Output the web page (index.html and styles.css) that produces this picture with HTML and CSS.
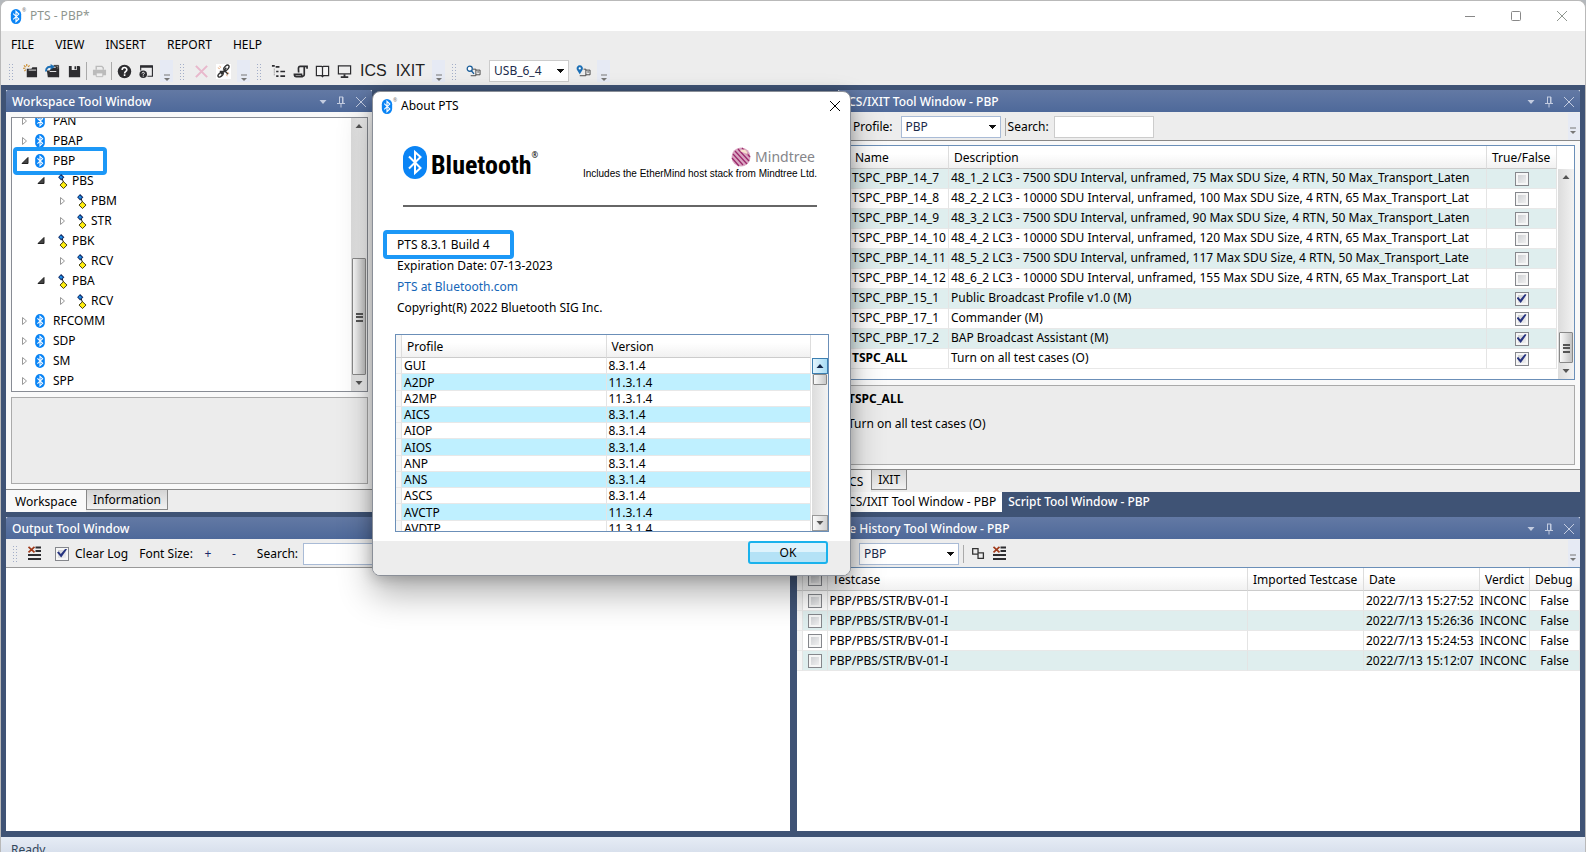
FILE: index.html
```html
<!DOCTYPE html>
<html lang="en">
<head>
<meta charset="utf-8">
<title>PTS - PBP*</title>
<link rel="stylesheet" href="styles.css">
</head>
<body>
<svg class="defs" aria-hidden="true">
  <symbol id="bt" viewBox="0 0 12 16"><rect x="0.5" width="11" height="16" rx="5.5" fill="#0a84f5"/><path d="M3 5l6 5.600L6 13.500v-11l3 2.900L3 11" fill="none" stroke="#fff" stroke-width="1.200"/></symbol>
  <symbol id="node" viewBox="0 0 10 16"><path d="M4 5l2 5" stroke="#000"/><path d="M3 0l3.500 3.500L3 7-.2 3.500z" fill="#102a66"/><path d="M2.600 1.500l2.400 2-2 1.800-2-1.800z" fill="#1e8fe8"/><path d="M5.500 8.200l3.800 3.600-3.800 3.700L1.800 11.800z" fill="#ffee10" stroke="#3a3408"/></symbol>
  <symbol id="closed" viewBox="0 0 8 10"><path d="M1.500 1.500v7L5.500 5z" fill="#fff" stroke="#999"/></symbol>
  <symbol id="open" viewBox="0 0 8 10"><path d="M7 1.500v6H1z" fill="#444" stroke="#222"/></symbol>
  <symbol id="down" viewBox="0 0 8 8"><path d="M.5 2h7L4 6z" fill="currentColor"/></symbol>
  <symbol id="up" viewBox="0 0 8 8"><path d="M.5 6h7L4 2z" fill="currentColor"/></symbol>
  <symbol id="pin" viewBox="0 0 8 12"><path d="M2 1h4v6M2.500 1v6M0 7.500h8M4 8v3.500M5.500 1v6" fill="none" stroke="currentColor"/></symbol>
  <symbol id="cross" viewBox="0 0 12 12"><path d="M1 1l10 10M11 1L1 11" fill="none" stroke="currentColor"/></symbol>
  <symbol id="more" viewBox="0 0 10 8"><path d="M2 1h6" stroke="#777"/><path d="M2 4h6L5 7z" fill="#777"/></symbol>
  <symbol id="clear" viewBox="0 0 14 15"><path d="M8 1.500h5.500M8 5h5.500M.5 9h13M.5 13h13" stroke="#2d2d30" stroke-width="2"/><path d="M1 .8l6 5.600M7 .8L1 6.400" stroke="#a03a1a" stroke-width="1.700"/></symbol>
</svg>
<main class="window">
  <header class="titlebar">
    <svg class="app-icon"><use href="#bt"/></svg><span class="dot">®</span>
    <h1>PTS - PBP*</h1>
    <button aria-label="Minimize"><svg viewBox="0 0 12 12"><path d="M1 6.500h10" stroke="#888"/></svg></button>
    <button aria-label="Maximize"><svg viewBox="0 0 12 12"><rect x="1.500" y="1.500" width="9" height="9" rx="1" fill="none" stroke="#888"/></svg></button>
    <button aria-label="Close"><svg><use href="#cross"/></svg></button>
  </header>
  <nav class="menubar"><button>FILE</button><button>VIEW</button><button>INSERT</button><button>REPORT</button><button>HELP</button></nav>
  <div class="toolbar main-tools">
    <i class="grip"></i>
    <button aria-label="New"><svg viewBox="0 0 16 16"><path d="M4 5h5l1-1.500h5V14H4z" fill="#2d2d30"/><path d="M6 6.500h8" stroke="#eee"/><path d="M4 0v2.500M0 4.500h2.500M1 1.500l1.700 1.700M7 1.500L5.500 3M1.500 7.500L3 6" stroke="#c98a2b" stroke-width="1.200"/></svg></button>
    <button aria-label="Open"><svg viewBox="0 0 16 16"><path d="M2 7h3l2-3h8v10H3z" fill="#2d2d30"/><path d="M9 2h5v3M5 8h7" stroke="#eee"/><path d="M9.500 3V1.500h5V14" fill="none" stroke="#2d2d30"/><path d="M1 8C1 3.500 4 2.500 7 3" fill="none" stroke="#1c6fb5" stroke-width="2"/><path d="M6 0l4.500 3L6 6z" fill="#1c6fb5"/></svg></button>
    <button aria-label="Save"><svg viewBox="0 0 16 16"><path d="M2 2h11l1 1v11H2z" fill="#2d2d30"/><path d="M5 2h5.500v4.500H5z" fill="#eee"/><path d="M8 2.500h1.700v3H8z" fill="#2d2d30"/></svg></button>
    <i class="sep"></i>
    <button aria-label="Print" disabled><svg viewBox="0 0 16 16"><path d="M4.500 6V2.500h6L12 4v2" fill="none" stroke="#bbb" stroke-width="1.500"/><path d="M1 6h14v6H1z" fill="#bbb"/><path d="M4.500 9.500h7v4h-7z" fill="#eee" stroke="#bbb"/></svg></button>
    <i class="sep"></i>
    <button aria-label="Help"><svg viewBox="0 0 16 16"><circle cx="8" cy="8" r="7.200" fill="#2d2d30"/><path d="M5.500 6.300C5.500 3 10.500 3 10.500 6c0 1.800-2.400 1.900-2.400 4M8.100 11v1.800" fill="none" stroke="#fff" stroke-width="1.700"/></svg></button>
    <button aria-label="Window help"><svg viewBox="0 0 16 16"><path d="M1.800 7V2.500h12.500V13H9" fill="none" stroke="#2d2d30" stroke-width="1.200"/><path d="M1.200 2.700h13.600" stroke="#2d2d30" stroke-width="2.500"/><circle cx="4.500" cy="11" r="4" fill="#2d2d30"/><path d="M3.200 10c.3-1.600 2.700-1.400 2.500 0-.1.800-1.200.8-1.200 2M4.500 12.500v1" stroke="#fff" fill="none"/></svg></button>
    <button class="more" aria-label="More"><svg><use href="#more"/></svg></button>
    <i class="grip"></i>
    <button aria-label="Delete" disabled><svg viewBox="0 0 16 16"><path d="M2 2l12 12M14 2L2 14" stroke="#e8b8cc" stroke-width="2.200"/></svg></button>
    <button aria-label="Link"><svg viewBox="0 0 16 16"><path d="M0 0h16v16H0z" fill="#fff"/><path d="M8 6c0-3 4-6 5.500-4.500S12 7 9.500 7.500M8 9c0 3-4 6-5.500 4.500S4 9 7 8.500M5.500 11L11 4M4 8h6l3 3" fill="none" stroke="#333" stroke-width="1.500"/><path d="M2 4l2 1M4 2l1 2M12 13l-1-2M14 10l-2-1" stroke="#e0a070"/></svg></button>
    <button class="more" aria-label="More"><svg><use href="#more"/></svg></button>
    <i class="grip"></i>
    <button aria-label="Outline"><svg viewBox="0 0 16 16"><path d="M1 2h3M5 3h4M5.500 8H8M10 8h5M5.500 13H8M10 13h5" stroke="#2d2d30" stroke-width="1.800"/><path d="M3.500 5v8" stroke="#777" stroke-dasharray="1 1"/></svg></button>
    <button aria-label="Script"><svg viewBox="0 0 16 16"><path d="M15 5V2.500H7.500C5 2.500 6 6 6 9M12 3v8c0 3-3 2.500-3 0H1.500c0 2 .5 2.500 2 2.500h7" fill="none" stroke="#2d2d30" stroke-width="1.800"/></svg></button>
    <button aria-label="Book"><svg viewBox="0 0 16 16"><path d="M1.500 2.500H7l1 1 1-1h5.500v10H9l-1 1-1-1H1.500zM8 3v11" fill="#f5f5f5" stroke="#2d2d30" stroke-width="1.300"/></svg></button>
    <button aria-label="Monitor"><svg viewBox="0 0 16 16"><path d="M1.500 2h13v8.500h-13z" fill="none" stroke="#2d2d30" stroke-width="1.300"/><path d="M7 11h2v2H7zM4 13h8v1.800H4z" fill="#2d2d30"/></svg></button>
    <button class="word">ICS</button>
    <button class="word">IXIT</button>
    <button class="more" aria-label="More"><svg><use href="#more"/></svg></button>
    <i class="grip"></i>
    <button aria-label="Find device"><svg viewBox="0 0 16 16"><path d="M5 12.500h5.500v-7H7M10.500 6.500H15v5h-4.500M12 8.500h2" fill="none" stroke="#444"/><circle cx="4" cy="5" r="2.700" fill="#fff" stroke="#1c5f9a" stroke-width="1.400"/><path d="M5.500 7l3 3.500" stroke="#1c5f9a" stroke-width="1.500"/></svg></button>
    <select aria-label="Device" class="device"><option>USB_6_4</option></select>
    <button aria-label="Locate device"><svg viewBox="0 0 16 16"><path d="M4 12.500h6.500v-7H8M10.500 6.500H15v5h-4.500M12 8.500h2" fill="none" stroke="#444"/><path d="M4 11L1 6a3.300 3.300 0 1 1 6 0z" fill="#1c6fb5"/><circle cx="4" cy="4.700" r="1.200" fill="#fff"/></svg></button>
    <button class="more" aria-label="More"><svg><use href="#more"/></svg></button>
  </div>

  <div class="workbench">
    <div class="upper">
      <section class="panel workspace">
        <div class="panel-title"><h2>Workspace Tool Window</h2><svg class="t1"><use href="#down"/></svg><svg class="t2"><use href="#pin"/></svg><svg class="t3"><use href="#cross"/></svg></div>
        <div class="workspace-body">
          <div class="tree-box">
            <ul class="tree">
              <li><svg class="tw"><use href="#closed"/></svg><svg class="ic"><use href="#bt"/></svg>PAN</li>
              <li><svg class="tw"><use href="#closed"/></svg><svg class="ic"><use href="#bt"/></svg>PBAP</li>
              <li class="marked"><svg class="tw"><use href="#open"/></svg><svg class="ic"><use href="#bt"/></svg>PBP</li>
              <li class="l2"><svg class="tw"><use href="#open"/></svg><svg class="ic"><use href="#node"/></svg>PBS</li>
              <li class="l3"><svg class="tw"><use href="#closed"/></svg><svg class="ic"><use href="#node"/></svg>PBM</li>
              <li class="l3"><svg class="tw"><use href="#closed"/></svg><svg class="ic"><use href="#node"/></svg>STR</li>
              <li class="l2"><svg class="tw"><use href="#open"/></svg><svg class="ic"><use href="#node"/></svg>PBK</li>
              <li class="l3"><svg class="tw"><use href="#closed"/></svg><svg class="ic"><use href="#node"/></svg>RCV</li>
              <li class="l2"><svg class="tw"><use href="#open"/></svg><svg class="ic"><use href="#node"/></svg>PBA</li>
              <li class="l3"><svg class="tw"><use href="#closed"/></svg><svg class="ic"><use href="#node"/></svg>RCV</li>
              <li><svg class="tw"><use href="#closed"/></svg><svg class="ic"><use href="#bt"/></svg>RFCOMM</li>
              <li><svg class="tw"><use href="#closed"/></svg><svg class="ic"><use href="#bt"/></svg>SDP</li>
              <li><svg class="tw"><use href="#closed"/></svg><svg class="ic"><use href="#bt"/></svg>SM</li>
              <li><svg class="tw"><use href="#closed"/></svg><svg class="ic"><use href="#bt"/></svg>SPP</li>
            </ul>
            <div class="scroll"><svg><use href="#up"/></svg><span class="track"></span><span class="thumb long"></span><svg><use href="#down"/></svg></div>
          </div>
          <div class="info-box"></div>
        </div>
        <div class="tabs"><button class="tab on">Workspace</button><button class="tab">Information</button></div>
      </section>
      <section class="panel ics">
        <div class="panel-title"><h2>ICS/IXIT Tool Window - PBP</h2><svg class="t1"><use href="#down"/></svg><svg class="t2"><use href="#pin"/></svg><svg class="t3"><use href="#cross"/></svg></div>
        <div class="toolbar ics-tools">
          <label for="ics-profile">Profile:</label><select id="ics-profile"><option>PBP</option></select>
          <i class="sep"></i>
          <label for="ics-search">Search:</label><input type="text" id="ics-search">
          <span class="end-more"><svg><use href="#more"/></svg></span>
        </div>
        <div class="ics-body">
          <div class="grid-box">
            <table class="grid ics-grid">
              <colgroup><col class="c-head"><col class="c-name"><col><col class="c-flag"></colgroup>
              <thead><tr><th></th><th>Name</th><th>Description</th><th>True/False</th></tr></thead>
              <tbody>
                <tr><td></td><td>TSPC_PBP_14_7</td><td>48_1_2 LC3 - 7500 SDU Interval, unframed, 75 Max SDU Size, 4 RTN, 50 Max_Transport_Laten</td><td><input type="checkbox" aria-label="TSPC_PBP_14_7"></td></tr>
                <tr><td></td><td>TSPC_PBP_14_8</td><td>48_2_2 LC3 - 10000 SDU Interval, unframed, 100 Max SDU Size, 4 RTN, 65 Max_Transport_Lat</td><td><input type="checkbox" aria-label="TSPC_PBP_14_8"></td></tr>
                <tr><td></td><td>TSPC_PBP_14_9</td><td>48_3_2 LC3 - 7500 SDU Interval, unframed, 90 Max SDU Size, 4 RTN, 50 Max_Transport_Laten</td><td><input type="checkbox" aria-label="TSPC_PBP_14_9"></td></tr>
                <tr><td></td><td>TSPC_PBP_14_10</td><td>48_4_2 LC3 - 10000 SDU Interval, unframed, 120 Max SDU Size, 4 RTN, 65 Max_Transport_Lat</td><td><input type="checkbox" aria-label="TSPC_PBP_14_10"></td></tr>
                <tr><td></td><td>TSPC_PBP_14_11</td><td>48_5_2 LC3 - 7500 SDU Interval, unframed, 117 Max SDU Size, 4 RTN, 50 Max_Transport_Late</td><td><input type="checkbox" aria-label="TSPC_PBP_14_11"></td></tr>
                <tr><td></td><td>TSPC_PBP_14_12</td><td>48_6_2 LC3 - 10000 SDU Interval, unframed, 155 Max SDU Size, 4 RTN, 65 Max_Transport_Lat</td><td><input type="checkbox" aria-label="TSPC_PBP_14_12"></td></tr>
                <tr><td></td><td>TSPC_PBP_15_1</td><td>Public Broadcast Profile v1.0 (M)</td><td><input type="checkbox" checked aria-label="TSPC_PBP_15_1"></td></tr>
                <tr><td></td><td>TSPC_PBP_17_1</td><td>Commander (M)</td><td><input type="checkbox" checked aria-label="TSPC_PBP_17_1"></td></tr>
                <tr><td></td><td>TSPC_PBP_17_2</td><td>BAP Broadcast Assistant (M)</td><td><input type="checkbox" checked aria-label="TSPC_PBP_17_2"></td></tr>
                <tr><td></td><td><b>TSPC_ALL</b></td><td>Turn on all test cases (O)</td><td><input type="checkbox" checked aria-label="TSPC_ALL"></td></tr>
              </tbody>
            </table>
            <div class="scroll below-head"><svg><use href="#up"/></svg><span class="track"></span><span class="thumb short"></span><svg><use href="#down"/></svg></div>
          </div>
          <div class="info-box"><b>TSPC_ALL</b><p>Turn on all test cases (O)</p></div>
        </div>
        <div class="tabs"><button class="tab on">ICS</button><button class="tab">IXIT</button></div>
        <div class="dock-tabs"><button class="on">ICS/IXIT Tool Window - PBP</button><button>Script Tool Window - PBP</button></div>
      </section>
    </div>
    <div class="lower">
      <section class="panel output">
        <div class="panel-title"><h2>Output Tool Window</h2></div>
        <div class="toolbar out-tools">
          <i class="grip"></i>
          <button aria-label="Clear"><svg><use href="#clear"/></svg></button>
          <input type="checkbox" id="clear-log" checked><label for="clear-log">Clear Log</label>
          <span class="fs">Font Size:</span><button class="pm">+</button><button class="pm">-</button>
          <label for="out-search">Search:</label><input type="text" id="out-search">
        </div>
        <div class="log"></div>
      </section>
      <section class="panel history">
        <div class="panel-title"><h2>Test Case History Tool Window - PBP</h2><svg class="t1"><use href="#down"/></svg><svg class="t2"><use href="#pin"/></svg><svg class="t3"><use href="#cross"/></svg></div>
        <div class="toolbar hist-tools">
          <label for="hist-profile">Profile:</label><select id="hist-profile"><option>PBP</option></select>
          <i class="sep"></i>
          <button aria-label="Cascade"><svg viewBox="0 0 14 14"><path d="M2.500 2.500h5v5h-5zM7.500 6.500h5v5h-5z" fill="#eee" stroke="#333" stroke-width="1.200"/></svg></button>
          <button aria-label="Clear"><svg><use href="#clear"/></svg></button>
          <span class="end-more"><svg><use href="#more"/></svg></span>
        </div>
        <div class="log">
          <table class="grid hist-grid">
            <colgroup><col class="c-head"><col class="c-check"><col><col class="c-imp"><col class="c-date"><col class="c-verd"><col class="c-debug"></colgroup>
            <thead><tr><th></th><th><input type="checkbox" aria-label="Select all"></th><th>Testcase</th><th>Imported Testcase</th><th>Date</th><th>Verdict</th><th>Debug</th></tr></thead>
            <tbody>
              <tr><td></td><td><input type="checkbox" aria-label="Row 1"></td><td>PBP/PBS/STR/BV-01-I</td><td></td><td>2022/7/13 15:27:52</td><td>INCONC</td><td>False</td></tr>
              <tr><td></td><td><input type="checkbox" aria-label="Row 2"></td><td>PBP/PBS/STR/BV-01-I</td><td></td><td>2022/7/13 15:26:36</td><td>INCONC</td><td>False</td></tr>
              <tr><td></td><td><input type="checkbox" aria-label="Row 3"></td><td>PBP/PBS/STR/BV-01-I</td><td></td><td>2022/7/13 15:24:53</td><td>INCONC</td><td>False</td></tr>
              <tr><td></td><td><input type="checkbox" aria-label="Row 4"></td><td>PBP/PBS/STR/BV-01-I</td><td></td><td>2022/7/13 15:12:07</td><td>INCONC</td><td>False</td></tr>
            </tbody>
          </table>
        </div>
      </section>
    </div>
  </div>
  <footer class="status">Ready</footer>

  <div class="dialog" role="dialog" aria-label="About PTS">
    <div class="dialog-title"><svg class="app-icon"><use href="#bt"/></svg><span class="dot">®</span><h2>About PTS</h2><button aria-label="Close"><svg><use href="#cross"/></svg></button></div>
    <div class="brand">
      <svg class="bt-logo" viewBox="0 0 24 33"><rect width="24" height="33" rx="12" fill="#0a84f5"/><path d="M6 10.500l11.500 11.500L12 27V6l5.500 5L6 22.500" fill="none" stroke="#fff" stroke-width="2"/></svg>
      <span class="bt-word">Bluetooth</span><span class="reg">®</span>
      <div class="partner">
        <div class="mind"><svg viewBox="0 0 20 20"><circle cx="10" cy="10" r="9.500" fill="#d9a6c2"/><path d="M2 7l10 11M4 4l12 13M7 2l11 12M11 1l8 9M1 11l7 8" stroke="#9c2a6c" stroke-width="1.300"/><path d="M9 4c4-3 7-1 8 4-3-3-5-2-8-4z" fill="#f8e3cd"/></svg><span>Mindtree</span></div>
        <small>Includes the EtherMind host stack from Mindtree Ltd.</small>
      </div>
    </div>
    <div class="facts">
      <p class="marked">PTS 8.3.1 Build 4</p>
      <p>Expiration Date: 07-13-2023</p>
      <p><a href="#">PTS at Bluetooth.com</a></p>
      <p>Copyright(R) 2022 Bluetooth SIG Inc.</p>
    </div>
    <div class="version-box">
      <table class="grid ver-grid">
        <colgroup><col class="c-head"><col><col></colgroup>
        <thead><tr><th></th><th>Profile</th><th>Version</th></tr></thead>
        <tbody>
          <tr><td></td><td>GUI</td><td>8.3.1.4</td></tr>
          <tr><td></td><td>A2DP</td><td>11.3.1.4</td></tr>
          <tr><td></td><td>A2MP</td><td>11.3.1.4</td></tr>
          <tr><td></td><td>AICS</td><td>8.3.1.4</td></tr>
          <tr><td></td><td>AIOP</td><td>8.3.1.4</td></tr>
          <tr><td></td><td>AIOS</td><td>8.3.1.4</td></tr>
          <tr><td></td><td>ANP</td><td>8.3.1.4</td></tr>
          <tr><td></td><td>ANS</td><td>8.3.1.4</td></tr>
          <tr><td></td><td>ASCS</td><td>8.3.1.4</td></tr>
          <tr><td></td><td>AVCTP</td><td>11.3.1.4</td></tr>
          <tr><td></td><td>AVDTP</td><td>11.3.1.4</td></tr>
        </tbody>
      </table>
      <div class="scroll below-head boxed"><svg class="hot"><use href="#up"/></svg><span class="thumb tiny"></span><span class="track"></span><svg><use href="#down"/></svg></div>
    </div>
    <div class="dialog-foot"><button class="ok">OK</button></div>
  </div>
</main>
</body>
</html>
```
FILE: styles.css
```css
*, *::before, *::after { box-sizing: border-box; }
body { margin: 0; background: #b4b8bc; font: 12px/16px "Noto Sans", "Open Sans", sans-serif; color: #000; overflow: hidden; }
h1, h2, p, ul { margin: 0; padding: 0; font-size: 12px; font-weight: 400; }
button, input, select { font: inherit; color: inherit; margin: 0; }
button { border: 0; background: none; padding: 0; }
svg { display: block; flex: none; }
.defs { position: absolute; width: 0; height: 0; }

.window { position: relative; height: 100vh; display: flex; flex-direction: column; overflow: hidden; background: #ededed; border: 1px solid #b9b9b9; border-bottom: 0; border-radius: 8px 8px 0 0; }
.titlebar { display: flex; align-items: center; height: 30px; flex: none; background: #fff; padding-left: 9px; color: #8f968f; }
.titlebar h1 { flex: 1; }
.titlebar button { width: 46px; height: 30px; display: grid; place-items: center; }
.titlebar button svg { width: 12px; height: 12px; }
.app-icon { width: 12px; height: 15px; }
.dot { width: 8px; height: 16px; font-size: 5px; line-height: 5px; color: #777; }
.menubar { display: flex; gap: 21px; height: 28px; flex: none; padding-left: 10px; align-items: center; }

.toolbar { display: flex; align-items: center; flex: none; background: #ededed; padding-top: 1px; }
.toolbar button { width: 22px; height: 22px; display: grid; place-items: center; flex: none; }
.toolbar button svg { width: 15px; height: 15px; }
.toolbar .more { width: 13px; background: #e6eaf4; align-items: end; margin: 0 6px 0 3px; }
.toolbar .more svg, .end-more svg { width: 10px; height: 8px; }
.grip { width: 6px; height: 17px; margin-right: 5px; flex: none; background: radial-gradient(circle, #a3aec8 0 1px, transparent 1px) 0 0 / 3px 3px; }
.sep { width: 1px; height: 18px; background: #aaa; margin: 0 1px; flex: none; }
.main-tools { height: 26px; padding: 0 0 2px 7px; }
.main-tools .word { font: 16px/22px "Liberation Sans", Arial, sans-serif; width: auto; margin: 0 4px 0 5px; color: #222; }
select { appearance: none; border: 1px solid #a9bbd6; border-radius: 0; height: 22px; padding: 0 4px; color: #1b2a4a; background: linear-gradient(to bottom left, #111 50%, transparent 50%) right 7px center / 4px 4px no-repeat, linear-gradient(to bottom right, #111 50%, transparent 50%) right 3px center / 4px 4px no-repeat, #fff; }
.device { width: 80px; margin: 0 3px 0 5px; border-color: #ccc; }
input[type="text"] { height: 22px; border: 1px solid #ccc; background: #fff; padding: 0 4px; }
input[type="checkbox"] { appearance: none; width: 14px; height: 14px; flex: none; border: 1px solid #85878c; background: linear-gradient(135deg, #c8cace, #f6f6f6); box-shadow: inset 0 0 0 2px #f6f6f6; display: block; }
input[type="checkbox"]:checked::after { content: ""; display: block; width: 10px; height: 9px; margin: 1px; background: #26337f; clip-path: polygon(0 45%, 18% 32%, 38% 60%, 85% 0, 100% 8%, 42% 100%); }

.workbench { display: flex; flex-direction: column; flex: none; gap: 5px; height: 752px; padding: 5px 5px 6px; background: #3f5375; }
.upper { display: flex; justify-content: space-between; flex: none; }
.lower { display: flex; gap: 7px; flex: 1; }
.panel { display: flex; flex-direction: column; background: #f9f9f9; min-width: 0; }
.panel-title { display: flex; align-items: center; gap: 10px; height: 22px; flex: none; padding: 1px 5px 0 6px; color: #fff; background: linear-gradient(#6379a4, #4e699a); border-radius: 2px 2px 0 0; }
.panel-title h2 { flex: 1; white-space: nowrap; font-weight: 500; }
.panel-title svg { color: #c3cce0; }
.t1 { width: 8px; height: 8px; }
.t2 { width: 8px; height: 12px; }
.t3 { width: 12px; height: 12px; }

.workspace { width: 366px; height: 422px; }
.workspace-body { flex: 1; display: flex; flex-direction: column; gap: 5px; padding: 5px 4px 5px 5px; border-bottom: 1px solid #888; }
.tree-box { display: flex; height: 275px; border: 1px solid #888c94; background: #fff; overflow: hidden; }
.tree { flex: 1; display: flex; flex-direction: column; justify-content: flex-end; list-style: none; }
.tree li { display: flex; align-items: center; height: 20px; flex: none; padding-left: 9px; position: relative; }
.tree .l2 { padding-left: 25px; }
.tree .l3 { padding-left: 47px; }
.tw { width: 8px; height: 10px; margin-right: 5px; }
.ic { width: 12px; height: 14px; margin-right: 7px; }
.l2 .ic, .l3 .ic { height: 15px; margin: 0 3px 0 7px; }
.l3 .ic { margin-left: 4px; }
.tree .marked::before, .facts .marked::before { content: ""; position: absolute; border: 4px solid #1c98f7; border-radius: 4px; }
.tree .marked::before { left: 1px; top: -4px; width: 94px; height: 28px; }
.info-box { flex: 1; border: 1px solid #aaa; background: #ececec; }
.scroll { display: flex; flex-direction: column; width: 16px; flex: none; background: linear-gradient(90deg, #dcdcdc, #f2f2f2); color: #555; }
.scroll svg { width: 16px; height: 16px; padding: 4px; }
.track { flex: 1; }
.thumb { margin: 0 1px; border: 1px solid #888; border-radius: 1px; background: linear-gradient(#555, #555) center calc(50% - 3px) / 7px 2px no-repeat, linear-gradient(#555, #555) center / 7px 2px no-repeat, linear-gradient(#555, #555) center calc(50% + 4px) / 7px 2px no-repeat, linear-gradient(90deg, #fafafa, #c2c2c2); }
.long { height: 117px; }
.short { height: 31px; }
.tiny { height: 11px; background: linear-gradient(90deg, #fafafa, #c8c8c8); }
.tabs { display: flex; align-items: flex-start; height: 22px; flex: none; background: #ededed; }
.tab { height: 20px; padding: 1px 6px 0; border: 1px solid #888; border-top: 0; background: linear-gradient(#d4d4d4, #f2f2f2); }
.tab.on { height: 22px; padding: 2px 9px 0; border: 0; background: #f9f9f9; }

.ics { width: 742px; }
.ics-tools { height: 29px; border-bottom: 1px solid #888; padding-left: 15px; }
.ics-tools select, .hist-tools select { width: 100px; margin: 0 3px 0 8px; }
.ics-tools input { width: 100px; margin-left: 5px; }
.ics-tools .sep + label, .hist-tools .sep + button { margin-left: 1px; }
.end-more { margin-left: auto; align-self: stretch; width: 12px; background: #e6eaf4; display: flex; align-items: flex-end; padding-bottom: 5px; }
.ics-body { display: flex; flex-direction: column; gap: 5px; padding: 4px 5px; border-bottom: 1px solid #888; }
.grid-box { display: flex; height: 235px; border: 1px solid #6b8fb8; background: #fff; }
.grid { align-self: flex-start; border-collapse: separate; border-spacing: 0; table-layout: fixed; width: 100%; }
.grid th { height: 23px; padding: 1px 5px 0; font-weight: 400; text-align: left; background: linear-gradient(#fff 35%, #f1f1f1); border-right: 1px solid #ddd; border-bottom: 1px solid #ccc; white-space: nowrap; }
.grid td { height: 20px; padding: 0 2px; white-space: nowrap; overflow: hidden; border-right: 1px solid #e4e4e4; border-bottom: 1px solid #e8e8e8; line-height: 16px; }
.grid tbody tr:nth-child(odd) { background: #dfeeee; }
.grid th:first-child, .grid td:first-child { background: #f6f6f6; padding: 0; }
.grid td input[type="checkbox"], .grid th input[type="checkbox"] { margin: 0 auto; }
.ics-grid td { padding-bottom: 2px; }
.ics-grid td:last-child { padding: 1px 0 0; }
.c-head { width: 6px; }
.c-name { width: 99px; }
.c-flag { width: 70px; }
.below-head { margin-top: 23px; margin-left: 1px; }
.ics .info-box { flex: none; height: 80px; padding: 5px 4px; }
.info-box p { margin-top: 9px; }
.ics .tab.on { padding: 2px 8px 0 7px; }
.dock-tabs { display: flex; height: 20px; background: #3f5375; }
.dock-tabs button { padding: 0 6px; color: #fff; font-weight: 500; }
.dock-tabs .on { background: #fff; color: #000; font-weight: 400; }

.output, .history { flex: 1; }
.log { flex: 1; background: #fff; }
.out-tools { height: 29px; padding-left: 6px; border-bottom: 1px solid #999; }
.out-tools button { margin-right: 10px; }
.out-tools label { margin: 0 11px 0 6px; }
.out-tools .pm { margin: 0 0 0 4px; color: #1b2a6a; }
.out-tools .pm + label { margin: 0 5px 0 12px; }
.out-tools input[type="text"] { flex: 0 1 200px; border-color: #a9bbd6; }
.hist-tools { height: 29px; padding-left: 15px; border-bottom: 1px solid #6b8fb8; }
.hist-grid tbody tr:nth-child(odd) { background: #fff; }
.hist-grid tbody tr:nth-child(even) { background: #dfeeee; }
.hist-grid td:nth-child(6) { padding: 0; }
.hist-grid td:last-child { text-align: center; }
.c-check { width: 25px; }
.c-imp, .c-date { width: 116px; }
.c-verd, .c-debug { width: 50px; }
.hist-grid th:nth-child(2) { padding: 0; }
.status { flex: none; height: 24px; padding: 5px 10px; background: linear-gradient(#e6ecf5, #d0d9e8); color: #33475b; }

.dialog { position: absolute; left: 371px; top: 90px; width: 479px; background: #fff; border: 1px solid #8a8f98; border-radius: 8px; overflow: hidden; box-shadow: 0 18px 34px rgba(0, 0, 0, .3), 0 2px 14px rgba(0, 0, 0, .22); }
.dialog-title { display: flex; align-items: center; height: 28px; padding: 0 9px 0 8px; }
.dialog-title h2 { flex: 1; }
.dialog-title button { width: 12px; height: 12px; }
.dialog-title button svg { width: 12px; height: 12px; }
.brand { display: flex; align-items: center; height: 87px; margin: 0 33px 0 30px; border-bottom: 2px solid #666; }
.bt-logo { width: 24px; height: 33px; margin-right: 4px; }
.bt-word { padding-top: 4px; font: bold 26px/32px "Liberation Sans Narrow", "Roboto Condensed", "Open Sans Condensed", Roboto, sans-serif; }
.reg { font-size: 8px; line-height: 8px; align-self: flex-start; margin-top: 31px; }
.partner { margin-left: auto; display: flex; flex-direction: column; align-items: flex-end; padding-top: 2px; }
.mind { display: flex; align-items: center; gap: 4px; margin-right: 2px; color: #85858a; font: 14px/20px "Noto Sans", sans-serif; }
.mind svg { width: 20px; height: 20px; }
.partner small { font: 10px/14px "Liberation Sans", Arial, sans-serif; }
.facts { padding: 27px 24px 0; }
.facts p { height: 21px; line-height: 21px; position: relative; }
.facts .marked::before { left: -14px; top: -4px; width: 131px; height: 29px; }
.facts a { color: #1566b8; text-decoration: none; }
.version-box { display: flex; height: 198px; margin: 16px 21px 9px 22px; border: 1px solid #6b8fb8; overflow: hidden; }
.ver-grid tbody td { height: 16px; line-height: 15px; }
.ver-grid tbody tr:nth-child(4n+2) td { height: 17px; }
.ver-grid tbody tr:nth-child(odd) { background: #fff; }
.ver-grid tbody tr:nth-child(even) { background: #bff0ff; }
.boxed svg { border: 1px solid #999; background: linear-gradient(90deg, #fafafa, #d2d2d2); padding: 3px; }
.boxed .hot { border-color: #3c7fb1; background: linear-gradient(90deg, #e4f5fd, #a8dcf5); color: #12264a; }
.dialog-foot { display: flex; justify-content: flex-end; height: 34px; padding-right: 22px; background: #ededed; }
.ok { width: 80px; height: 23px; border: 2px solid #1ab2ec; border-radius: 3px; background: linear-gradient(#dff3fc 50%, #b4e2f6 50%); }
```
